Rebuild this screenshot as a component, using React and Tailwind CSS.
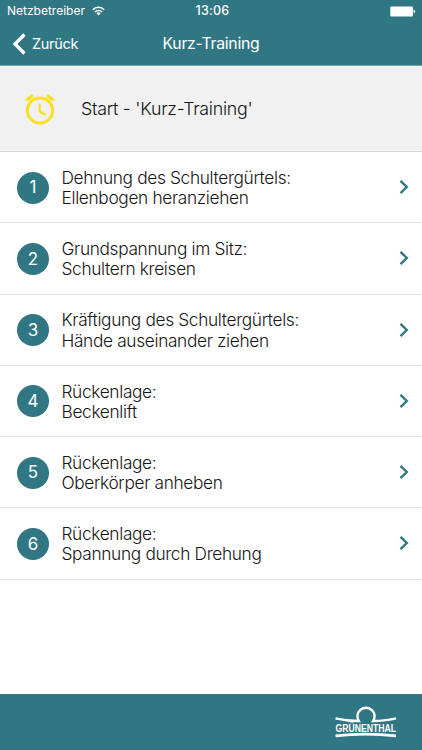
import React from 'react';

const exercises = [
    { title: 'Dehnung des Schultergürtels:', detail: 'Ellenbogen heranziehen' },
    { title: 'Grundspannung im Sitz:', detail: 'Schultern kreisen' },
    { title: 'Kräftigung des Schultergürtels:', detail: 'Hände auseinander ziehen' },
    { title: 'Rückenlage:', detail: 'Beckenlift' },
    { title: 'Rückenlage:', detail: 'Oberkörper anheben' },
    { title: 'Rückenlage:', detail: 'Spannung durch Drehung' },
];

const WifiIcon = () => (
    <svg width="13" height="10" viewBox="0 0 14 10" fill="none" stroke="currentColor" strokeWidth="1.6">
        <path d="M0.8 3.7a8.6 8.6 0 0 1 12.4 0" />
        <path d="M3 6.1a5.5 5.5 0 0 1 8 0" />
        <path d="M7 9.8 4.7 7.5a3.2 3.2 0 0 1 4.6 0z" fill="currentColor" stroke="none" />
    </svg>
);

const BatteryIcon = () => (
    <svg width="26" height="11" viewBox="0 0 26 11" fill="currentColor">
        <rect x="0.3" y="0.5" width="22.6" height="10" rx="1" />
        <path d="M23.6 3.8c1.1.3 1.6.9 1.6 1.7s-.5 1.4-1.6 1.7z" />
    </svg>
);

const AlarmIcon = () => (
    <svg width="32" height="32" viewBox="0 0 32 32" fill="none" stroke="currentColor">
        <circle cx="16" cy="17.5" r="12.6" strokeWidth="3" />
        <path d="M2.3 7.6 9 2M29.7 7.6 23 2" strokeWidth="3" />
        <path d="M15.7 10.5v8l6.1 3.6" strokeWidth="2.3" />
    </svg>
);

const Logo = () => (
    <svg className="overflow-visible" width="62" height="32" viewBox="0 0 62 32" fill="none" stroke="white">
        <path d="M0.5 11.3C8 13 16 14 23.8 14A8.6 8.6 0 1 1 38.2 14C46 14 53 13 61 11.3" strokeWidth="2.4" />
        <path d="M0.5 28.9c18-2.2 42-2.2 60.5 0" strokeWidth="2.7" />
        <text x="0.5" y="24.9" textLength="60.5" lengthAdjust="spacingAndGlyphs" fill="white" stroke="none" fontFamily="Liberation Sans, sans-serif" fontWeight="700" fontSize="11">GRÜNENTHAL</text>
    </svg>
);

const ExerciseRow = ({ number, title, detail }) => (
    <li className="flex h-[71.25px] items-center border-b border-[#e4e4e4] pl-[17px] pr-[13px]">
        <span className="mt-[1px] flex size-8 shrink-0 items-center justify-center rounded-full bg-[#317683] pt-[1px] text-[17px] text-white">
            {number}
        </span>
        <div className="ml-[12.5px] flex-1 whitespace-nowrap pt-[2px] text-[17.3px] leading-[20.3px] font-light tracking-[-0.34px]">
            <p>{title}</p>
            <p>{detail}</p>
        </div>
        <svg width="10" height="16" viewBox="0 0 10 16" fill="none" stroke="#317683" strokeWidth="2.4">
            <path d="M1.5 1.8 7.8 8 1.5 14.2" />
        </svg>
    </li>
);

const App = () => {
    return (
        <div className="flex h-[750px] w-full flex-col bg-white font-['Inter',sans-serif] text-[#151515]">
            <header className="h-[66px] shrink-0 border-b border-[#7ba5ae] bg-[#317683] text-white">
                <div className="grid h-[22px] grid-cols-3 items-center pl-[7px] pr-[6px] text-[12px]">
                    <div className="flex items-center gap-[7px]">
                        <span>Netzbetreiber</span>
                        <WifiIcon />
                    </div>
                    <span className="pl-[2px] pt-[1px] text-center text-[12.5px] font-medium tracking-[0.2px]">13:06</span>
                    <div className="flex justify-end">
                        <BatteryIcon />
                    </div>
                </div>
                <div className="grid h-[43px] grid-cols-3 items-center px-[12px]">
                    <button className="flex items-center gap-[6px] text-[14.5px] tracking-[-0.3px]">
                        <svg width="14" height="22" viewBox="0 0 14 22" fill="none" stroke="currentColor" strokeWidth="3.2">
                            <path d="M12.5 1.5 3 11l9.5 9.5" />
                        </svg>
                        <span className="pt-[1px]">Zurück</span>
                    </button>
                    <h1 className="whitespace-nowrap pt-[1px] text-center text-[15.8px] tracking-[-0.25px]">Kurz-Training</h1>
                </div>
            </header>

            <section className="flex h-[86px] shrink-0 items-center border-b border-[#d8d8d8] bg-[#f1f1f1] pl-[24px]">
                <span className="text-[#fadf22]">
                    <AlarmIcon />
                </span>
                <p className="ml-[25px] pt-[1px] text-[17.8px] font-light tracking-[-0.26px]">Start - 'Kurz-Training'</p>
            </section>

            <ul className="flex-1">
                {exercises.map((exercise, i) => (
                    <ExerciseRow key={i} number={i + 1} {...exercise} />
                ))}
            </ul>

            <footer className="flex h-[56px] shrink-0 items-center justify-end bg-[#317683] pr-[25px] pt-[2px]">
                <Logo />
            </footer>
        </div>
    );
};

export default App;
